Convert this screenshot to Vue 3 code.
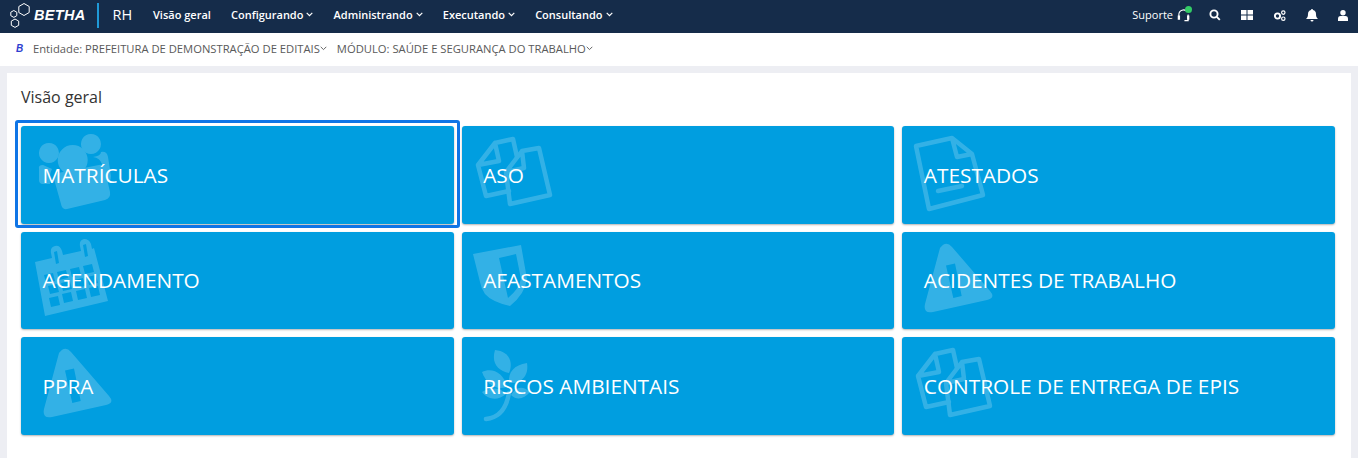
<template>
  <div class="page">
    <!-- Top bar -->
    <header class="topbar">
      <div class="brand">
        <svg class="logo" width="26" height="26" viewBox="0 0 26 26">
          <path d="M15 1.500l5.200 3v6l-5.200 3-5.200-3v-6z M4.800 8.500l3 1.700v3.500l-3 1.700-3-1.700v-3.500z M6 17l3.700 2.100v4.200L6 25.400l-3.700-2.100v-4.200z" />
        </svg>
        <span class="brand-name">BETHA</span>
        <span class="brand-sep"></span>
        <span class="brand-app">RH</span>
      </div>
      <nav class="menu">
        <a v-for="item in menu" :key="item.label" class="menu-item">
          {{ item.label }}
          <svg v-if="item.caret" class="caret" width="7" height="5" viewBox="0 0 7 5"><path d="M.7.800l2.800 2.800L6.300.800" /></svg>
        </a>
      </nav>
      <div class="tools">
        <span class="support">Suporte</span>
        <span class="headset">
          <svg width="13" height="15" viewBox="0 0 14 16">
            <path class="line" d="M2 10V7a5 5 0 0 1 9-3 M12 7v6.500H8" />
            <path d="M0.800 8h2.500v4.500H0.800z M10.800 8h2.500v4.500h-2.500z" fill="#fff" />
          </svg>
          <i class="dot"></i>
        </span>
        <svg class="tool" width="12" height="12" viewBox="0 0 12 12">
          <circle class="line thick" cx="5" cy="5" r="3.600" />
          <path class="line thick" d="M7.800 7.800l3 3" />
        </svg>
        <svg class="tool" width="12" height="10" viewBox="0 0 12 10">
          <path d="M0 0h5.500v4.500H0z M6.500 0H12v4.500H6.500z M0 5.500h5.500V10H0z M6.500 5.500H12V10H6.500z" fill="#fff" />
        </svg>
        <svg class="tool" width="13" height="11" viewBox="0 0 13 11">
          <circle class="line thick" cx="4.500" cy="6" r="2.600" />
          <circle class="line" cx="10.300" cy="2.600" r="1.700" />
          <circle class="line" cx="10.300" cy="8.700" r="1.700" />
        </svg>
        <svg class="tool" width="12" height="13" viewBox="0 0 12 13">
          <path d="M6 0a1 1 0 0 1 1 1c2 .4 3 2 3 4 0 2.500.6 3.500 2 5H0c1.400-1.500 2-2.500 2-5 0-2 1-3.600 3-4a1 1 0 0 1 1-1z M4.500 11h3a1.500 1.500 0 0 1-3 0z" fill="#fff" />
        </svg>
        <svg class="tool last" width="10" height="11" viewBox="0 0 10 11">
          <circle cx="5" cy="2.800" r="2.700" fill="#fff" />
          <path d="M0 11V8.500C0 6.800 1.400 6 2.500 6h5C8.600 6 10 6.800 10 8.500V11z" fill="#fff" />
        </svg>
      </div>
    </header>

    <!-- Context bar -->
    <div class="context">
      <span class="context-mark">B</span>
      <span class="context-item">Entidade: PREFEITURA DE DEMONSTRAÇÃO DE EDITAIS<svg class="caret dark" width="7" height="5" viewBox="0 0 7 5"><path d="M.7.800l2.800 2.800L6.300.800" /></svg></span>
      <span class="context-item">MÓDULO: SAÚDE E SEGURANÇA DO TRABALHO<svg class="caret dark" width="7" height="5" viewBox="0 0 7 5"><path d="M.7.800l2.800 2.800L6.300.800" /></svg></span>
    </div>

    <!-- Panel -->
    <main class="panel">
      <h1 class="panel-title">Visão geral</h1>
      <div class="grid">
        <a v-for="card in cards" :key="card.label" class="card" :class="{ focused: card.focused }">
          <svg class="card-icon" width="110" height="97" viewBox="0 0 110 97">
            <path
              v-for="(shape, i) in icons[card.icon]"
              :key="i"
              :d="shape.d"
              :class="shape.stroke ? 'ic-line' : 'ic-fill'"
            />
          </svg>
          <span class="card-label">{{ card.label }}</span>
        </a>
      </div>
    </main>
  </div>
</template>

<script setup>
const menu = [
  { label: 'Visão geral', caret: false },
  { label: 'Configurando', caret: true },
  { label: 'Administrando', caret: true },
  { label: 'Executando', caret: true },
  { label: 'Consultando', caret: true },
]

const warning = [
  { d: 'M38 16Q44 8 50 15L88 59Q94 66 85 68L31 80Q21 82 23 72Z M44 33.500L53 31.500L59.700 64L51.300 66Z' },
]

const docs = [
  { stroke: true, d: 'M33 17L51 13L55 31 M33 17L16 39L24 70L47 65 M33 17L37 35L16 39' },
  { stroke: true, d: 'M60 25L77 22L88 69L48 78L44 46Z M60 25L62 42L44 46' },
]

const icons = {
  people: [
    { d: 'M28 17a10 10 0 1 1-.1 0z M70 8a10 10 0 1 1-.1 0z' },
    { d: 'M36.700 34a15 15 0 1 1 30 0 15 15 0 0 1-30 0z' },
    { d: 'M37 47L78 39Q83 38 84 44L89 66Q90 72 84 74L46 83Q41 84 40 78L33 53Q32 48 37 47z' },
    { d: 'M18 43Q17 39 22 39L31 43Q28 48 29 58L22 58Q18 58 18 54z M72 31Q80 30 80 26Q86 25 87 31L90 50Q90 56 86 56L81 38Q79 32 72 31z' },
  ],
  docs,
  docs2: docs,
  file: [
    { stroke: true, d: 'M14 20L50 12L70 28L81 69L27 83Z M50 12L55 31L70 28' },
    { stroke: true, d: 'M36 65L60 60' },
  ],
  calendar: [
    { d: 'M14 30L31 26L30 21Q29 15 34 14Q39 13 41 19L42 23L60 19L59 14Q58 8 63 7Q68 7 70 12L71 17L73 16L87 69L24 84Z M33 20L35 32L38 31L36 19Z M62 13L64 25L67 24L65 12Z M23 43L32 41L34 49L25 51Z M36 40L45 38L47 46L38 48Z M49 37L58 35L60 43L51 45Z M62 34L71 32L73 40L64 42Z M27 54L36 52L38 60L29 62Z M40 51L49 49L51 57L42 59Z M53 48L62 46L64 54L55 56Z M66 45L75 43L77 51L68 53Z M28 66L37 64L39 73L30 75Z M41 62L50 60L52 69L43 71Z M55 59L64 57L66 66L57 68Z M68 56L77 54L79 63L70 65Z' },
  ],
  shield: [
    { d: 'M11 22L59 13L65 47Q63 62 48 74Q30 70 23 62Q19 56 18 50Z M37 26L54 22L59 47Q57 57 46 66Z' },
  ],
  warning,
  leaf: [
    { d: 'M33 13C46 14 52 24 47 36C36 34 29 26 33 13z' },
    { d: 'M65 26C67 38 60 47 47 46C46 35 52 28 65 26z' },
    { d: 'M20 35C30 30 42 36 45 50C33 54 24 46 20 35z' },
    { d: 'M20 55C28 50 38 50 44 57C36 64 26 63 20 55z' },
    { d: 'M68 55C60 48 54 50 49 58C55 64 62 62 68 55z' },
    { stroke: true, d: 'M24 82Q43 80 47 56' },
  ],
}

const cards = [
  { label: 'MATRÍCULAS', icon: 'people', focused: true },
  { label: 'ASO', icon: 'docs' },
  { label: 'ATESTADOS', icon: 'file' },
  { label: 'AGENDAMENTO', icon: 'calendar' },
  { label: 'AFASTAMENTOS', icon: 'shield' },
  { label: 'ACIDENTES DE TRABALHO', icon: 'warning' },
  { label: 'PPRA', icon: 'warning' },
  { label: 'RISCOS AMBIENTAIS', icon: 'leaf' },
  { label: 'CONTROLE DE ENTREGA DE EPIS', icon: 'docs2' },
]
</script>

<style>
html, body { margin: 0; overflow: hidden; }
</style>

<style scoped>
.page {
  height: 458px;
  overflow: hidden;
  background: #edeef3;
  font-family: 'Open Sans', sans-serif;
  display: flex;
  flex-direction: column;
}

/* ── TOP BAR ─────────────────────────────────────────────── */
.topbar {
  height: 33px;
  flex-shrink: 0;
  box-sizing: border-box;
  padding-bottom: 3px;
  background: #152c4a;
  color: #fff;
  display: flex;
  align-items: center;
  font-size: 11px;
}

.brand {
  display: flex;
  align-items: center;
  width: 153px;
  flex-shrink: 0;
  padding-left: 9px;
  box-sizing: border-box;
}
.logo { flex-shrink: 0; }
.logo path { fill: none; stroke: #fff; stroke-width: 1; }
.brand-name {
  margin-left: -1px;
  font-family: 'Liberation Sans', sans-serif;
  font-size: 14.5px;
  font-weight: 700;
  font-style: italic;
  letter-spacing: 0.3px;
}
.brand-sep {
  width: 2px;
  height: 25px;
  margin: 0 13px 0 12px;
  background: #1f9ad8;
}
.brand-app { font-size: 14.5px; margin-bottom: 2px; }

.menu { display: flex; align-items: center; gap: 20.1px; margin-bottom: 2px; }
.menu-item { display: flex; align-items: center; gap: 3px; font-weight: 600; white-space: nowrap; }

.caret { fill: none; stroke: #fff; stroke-width: 1.2; flex-shrink: 0; }
.caret.dark { stroke: #666; stroke-width: 1; }

.tools { margin-left: auto; display: flex; align-items: center; }
.support { margin: 0 4px 2px 0; }
.headset { position: relative; display: flex; width: 13px; margin-right: 19px; }
.dot {
  position: absolute;
  top: -2px;
  right: -2px;
  width: 7px;
  height: 7px;
  border-radius: 50%;
  background: #33cc66;
}
.tool { margin-right: 20px; flex-shrink: 0; }
.tool.last { margin-right: 10px; }
.line { fill: none; stroke: #fff; stroke-width: 1.2; }
.line.thick { stroke-width: 1.9; }

/* ── CONTEXT BAR ─────────────────────────────────────────── */
.context {
  height: 33px;
  flex-shrink: 0;
  box-sizing: border-box;
  padding: 0 0 3px 16px;
  background: #fff;
  display: flex;
  align-items: center;
  font-size: 11.22px;
  color: #5a5a5a;
}
.context-mark {
  width: 17px;
  font-family: 'Liberation Sans', sans-serif;
  font-size: 10px;
  font-weight: 700;
  font-style: italic;
  color: #2f3fd0;
}
.context-item { display: flex; align-items: center; margin-right: 10px; white-space: nowrap; }

/* ── PANEL ───────────────────────────────────────────────── */
.panel {
  flex: 1;
  margin: 7px 7px 0;
  padding: 0 16px 0 14px;
  background: #fff;
}
.panel-title {
  margin: 0;
  padding-top: 13px;
  height: 40px;
  font-size: 16px;
  line-height: 22px;
  font-weight: 400;
  color: #333;
}
.grid {
  display: grid;
  grid-template-columns: repeat(3, 1fr);
  grid-auto-rows: 97.5px;
  gap: 8px;
}
.card {
  position: relative;
  display: flex;
  align-items: center;
  padding: 1px 0 0 21.5px;
  border-radius: 3px;
  background: #009ee0;
  box-shadow: 0 1px 2px rgba(0, 0, 0, 0.3);
  color: #fff;
}
.card.focused::after {
  content: '';
  position: absolute;
  top: -6.5px;
  left: -6px;
  right: -6px;
  bottom: -4px;
  border: 3px solid #0f75e6;
  border-radius: 3px;
}
.card-icon {
  position: absolute;
  top: 0;
  left: 0;
  opacity: 0.2;
}
.ic-fill { fill: #fff; fill-rule: evenodd; }
.ic-line { fill: none; stroke: #fff; stroke-width: 4.5; stroke-linejoin: round; stroke-linecap: round; }
.card-label {
  position: relative;
  font-size: 20.8px;
  line-height: 1;
  white-space: nowrap;
}
</style>
